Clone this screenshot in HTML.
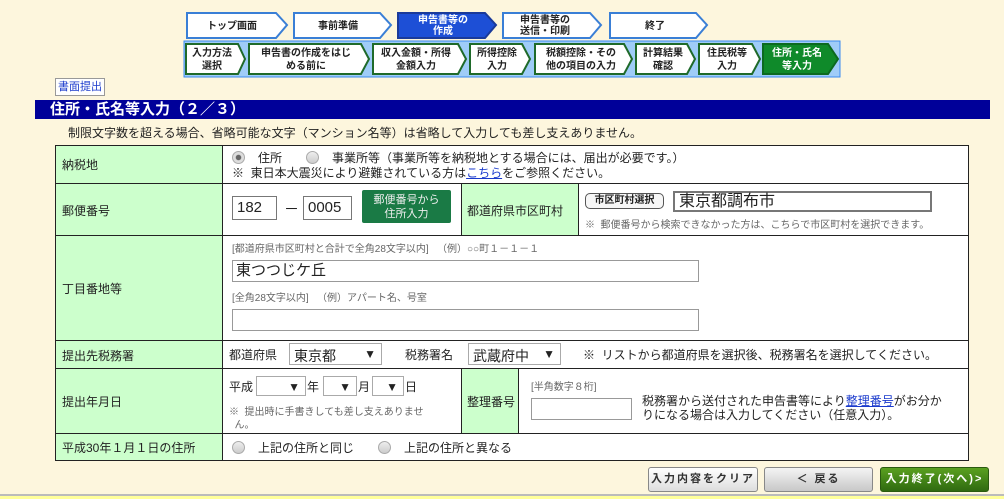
<!DOCTYPE html>
<html><head><meta charset="utf-8"><style>
*{box-sizing:border-box;margin:0;padding:0}
body{width:1004px;height:499px;overflow:hidden;background:#fdf6dd;font-family:"Liberation Sans","Noto Sans CJK JP",sans-serif;font-size:12px;color:#222;position:relative}
.a{position:absolute;white-space:nowrap}
.lab{background:#ccffcc}
.cell{position:absolute;border:1px solid #222}
.inp{position:absolute;background:#fff;border:1px solid #999}
.sel{position:absolute;background:#fff;border:1px solid #aaa;font-size:14px;padding:2px 4px}
.sel:after{content:"▼";position:absolute;right:5px;top:3px;font-size:12px}
.rad{position:absolute;width:13px;height:13px;border-radius:50%;border:1px solid #aaa;background:linear-gradient(#eee,#ccc)}
.note{font-size:10px;color:#666}
.btn{position:absolute;border:1px solid #888;border-radius:3px;font-size:11px;text-align:center;line-height:23px;letter-spacing:2px;font-weight:bold}
</style></head><body>
<svg class="a" style="left:0;top:0" width="1004" height="80" font-family="Liberation Sans,Noto Sans CJK JP,sans-serif" font-size="10" font-weight="bold">
<g stroke="#3a7fd6" stroke-width="2" fill="#fff">
<polygon points="187,13 276,13 287,25 276,38 187,38"/>
<polygon points="294,13 380,13 391,25 380,38 294,38"/>
<polygon points="398,13 485,13 496,25 485,38 398,38" fill="#1d4fd6" stroke="#1a3a9a"/>
<polygon points="503,13 590,13 601,25 590,38 503,38"/>
<polygon points="610,13 696,13 707,25 696,38 610,38"/>
</g>
<text x="232" y="29" text-anchor="middle" fill="#222">トップ画面</text>
<text x="338" y="29" text-anchor="middle" fill="#222">事前準備</text>
<text x="443" y="23" text-anchor="middle" fill="#fff">申告書等の</text>
<text x="443" y="34" text-anchor="middle" fill="#fff">作成</text>
<text x="520" y="23" fill="#222">申告書等の</text>
<text x="520" y="34" fill="#222">送信・印刷</text>
<text x="655" y="29" text-anchor="middle" fill="#222">終了</text>
<rect x="184" y="41" width="656" height="36" fill="#9fccf8" stroke="#3a8af0"/>
<g stroke="#1f6a2a" stroke-width="2" fill="#fff">
<polygon points="186,44 238,44 245,59 238,74 186,74"/>
<polygon points="249,44 361,44 369,59 361,74 249,74"/>
<polygon points="373,44 458,44 466,59 458,74 373,74"/>
<polygon points="470,44 522,44 530,59 522,74 470,74"/>
<polygon points="535,44 624,44 632,59 624,74 535,74"/>
<polygon points="636,44 687,44 695,59 687,74 636,74"/>
<polygon points="699,44 752,44 760,59 752,74 699,74"/>
<polygon points="763,44 828,44 838,59 828,74 763,74" fill="#0f8a2a" stroke="#0c6a20"/>
</g>
<g text-anchor="middle" fill="#222">
<text x="212" y="56">入力方法</text><text x="212" y="69">選択</text>
<text x="306" y="56">申告書の作成をはじ</text><text x="306" y="69">める前に</text>
<text x="416" y="56">収入金額・所得</text><text x="416" y="69">金額入力</text>
<text x="497" y="56">所得控除</text><text x="497" y="69">入力</text>
<text x="581" y="56">税額控除・その</text><text x="581" y="69">他の項目の入力</text>
<text x="663" y="56">計算結果</text><text x="663" y="69">確認</text>
<text x="727" y="56">住民税等</text><text x="727" y="69">入力</text>
<text x="797" y="56" fill="#fff">住所・氏名</text><text x="797" y="69" fill="#fff">等入力</text>
</g>
</svg>
<div class="a" style="left:55px;top:78px;width:50px;height:18px;border:1px solid #999;background:#fff;font-size:11px;color:#1a3acc;text-align:center;line-height:16px">書面提出</div>
<div class="a" style="left:35px;top:100px;width:955px;height:19px;background:#000099;color:#fff;font-weight:bold;font-size:15px;line-height:19px;padding-left:15px">住所・氏名等入力（２／３）</div>
<div class="a" style="left:68px;top:124px;font-size:12px">制限文字数を超える場合、省略可能な文字（マンション名等）は省略して入力しても差し支えありません。</div>

<div class="a" style="left:55px;top:145px;width:914px;height:316px;background:#fff;border:1px solid #222"></div>
<div class="cell lab" style="left:55px;top:145px;width:168px;height:39px"></div>
<div class="cell lab" style="left:55px;top:183px;width:168px;height:53px"></div>
<div class="cell lab" style="left:55px;top:235px;width:168px;height:106px"></div>
<div class="cell lab" style="left:55px;top:340px;width:168px;height:29px"></div>
<div class="cell lab" style="left:55px;top:368px;width:168px;height:66px"></div>
<div class="cell lab" style="left:55px;top:433px;width:168px;height:28px"></div>
<div class="cell" style="left:222px;top:145px;width:747px;height:39px"></div>
<div class="cell" style="left:222px;top:183px;width:747px;height:53px"></div>
<div class="cell" style="left:222px;top:235px;width:747px;height:106px"></div>
<div class="cell" style="left:222px;top:340px;width:747px;height:29px"></div>
<div class="cell" style="left:222px;top:368px;width:747px;height:66px"></div>
<div class="cell" style="left:222px;top:433px;width:747px;height:28px"></div>
<div class="cell lab" style="left:461px;top:183px;width:118px;height:53px"></div>
<div class="cell lab" style="left:461px;top:368px;width:58px;height:66px"></div>

<div class="a" style="left:62px;top:156px">納税地</div>
<div class="a" style="left:62px;top:202px">郵便番号</div>
<div class="a" style="left:62px;top:280px">丁目番地等</div>
<div class="a" style="left:62px;top:347px">提出先税務署</div>
<div class="a" style="left:62px;top:393px">提出年月日</div>
<div class="a" style="left:62px;top:439px">平成30年１月１日の住所</div>
<div class="a" style="left:467px;top:202px">都道府県市区町村</div>
<div class="a" style="left:467px;top:393px">整理番号</div>

<span class="rad" style="left:232px;top:151px;background:radial-gradient(#666 30%,#ddd 40%)"></span>
<div class="a" style="left:258px;top:149px">住所</div>
<span class="rad" style="left:306px;top:151px"></span>
<div class="a" style="left:332px;top:149px">事業所等（事業所等を納税地とする場合には、届出が必要です。）</div>
<div class="a" style="left:232px;top:164px">※ &nbsp;東日本大震災により避難されている方は<span style="color:#1a3acc;text-decoration:underline">こちら</span>をご参照ください。</div>

<div class="inp" style="left:232px;top:196px;width:45px;height:24px;font-size:15px;padding:2px 4px;border-color:#777">182</div>
<div class="a" style="left:284px;top:198px;font-size:15px">－</div>
<div class="inp" style="left:303px;top:196px;width:49px;height:24px;font-size:15px;padding:2px 4px;border-color:#777">0005</div>
<div class="a" style="left:362px;top:190px;width:89px;height:33px;background:#1a7a45;border-radius:2px;color:#eee;font-size:11px;text-align:center;line-height:14px;padding-top:3px">郵便番号から<br>住所入力</div>
<div class="a" style="left:585px;top:193px;width:79px;height:16px;border:1px solid #555;border-radius:5px;font-size:10px;font-weight:bold;text-align:center;line-height:14px;background:#f6f6f6">市区町村選択</div>
<div class="inp" style="left:673px;top:191px;width:259px;height:21px;border:2px solid #777;font-size:16px;line-height:17px;padding-left:4px">東京都調布市</div>
<div class="a note" style="left:585px;top:216px">※ &nbsp;郵便番号から検索できなかった方は、こちらで市区町村を選択できます。</div>

<div class="a note" style="left:232px;top:240px">[都道府県市区町村と合計で全角28文字以内] &nbsp;&nbsp;（例）○○町１－１－１</div>
<div class="inp" style="left:232px;top:260px;width:467px;height:22px;font-size:15px;padding-left:3px;line-height:20px">東つつじケ丘</div>
<div class="a note" style="left:232px;top:289px">[全角28文字以内] &nbsp;&nbsp;（例）アパート名、号室</div>
<div class="inp" style="left:232px;top:309px;width:467px;height:22px"></div>

<div class="a" style="left:229px;top:346px">都道府県</div>
<div class="sel" style="left:289px;top:343px;width:93px;height:22px">東京都</div>
<div class="a" style="left:405px;top:346px">税務署名</div>
<div class="sel" style="left:468px;top:343px;width:93px;height:22px">武蔵府中</div>
<div class="a" style="left:583px;top:346px">※ &nbsp;リストから都道府県を選択後、税務署名を選択してください。</div>

<div class="a" style="left:229px;top:378px">平成</div>
<div class="sel" style="left:256px;top:376px;width:50px;height:20px"></div>
<div class="a" style="left:307px;top:378px">年</div>
<div class="sel" style="left:323px;top:376px;width:34px;height:20px"></div>
<div class="a" style="left:358px;top:378px">月</div>
<div class="sel" style="left:372px;top:376px;width:32px;height:20px"></div>
<div class="a" style="left:405px;top:378px">日</div>
<div class="a note" style="left:229px;top:406px;line-height:13px">※ &nbsp;提出時に手書きしても差し支えありませ<br>&nbsp;&nbsp;ん。</div>
<div class="a note" style="left:531px;top:378px">[半角数字８桁]</div>
<div class="inp" style="left:531px;top:398px;width:101px;height:22px"></div>
<div class="a" style="left:642px;top:394px;line-height:14px">税務署から送付された申告書等により<span style="color:#1a3acc;text-decoration:underline">整理番号</span>がお分か<br>りになる場合は入力してください（任意入力）。</div>

<span class="rad" style="left:232px;top:441px"></span>
<div class="a" style="left:258px;top:439px">上記の住所と同じ</div>
<span class="rad" style="left:378px;top:441px"></span>
<div class="a" style="left:404px;top:439px">上記の住所と異なる</div>

<div class="btn" style="left:648px;top:467px;width:110px;height:25px;background:linear-gradient(#fff,#ddd);color:#333">入力内容をクリア</div>
<div class="btn" style="left:764px;top:467px;width:109px;height:25px;background:linear-gradient(#f4f4f4,#c8c8c8);color:#333">＜ 戻る</div>
<div class="btn" style="left:880px;top:467px;width:109px;height:25px;background:linear-gradient(#5aa020,#2f6a10);color:#fff;border-color:#2a5a10">入力終了(次へ)&gt;</div>
<div class="a" style="left:0;top:494px;width:1004px;height:5px;background:#ffff9a;border-top:2px solid #bbb"></div>
</body></html>
